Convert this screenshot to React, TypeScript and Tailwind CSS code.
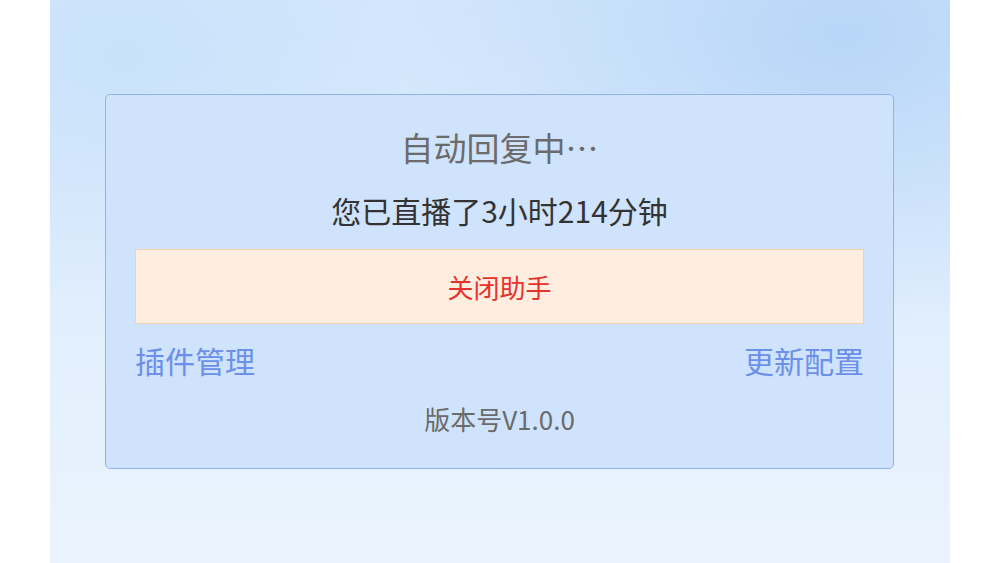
import React from "react";

export default function App() {
  const font = { fontFamily: '"Noto Sans CJK SC", "Noto Sans", sans-serif' };
  return (
    <div className="w-full h-[563px] bg-white flex justify-center" style={font}>
      <div className="w-[900px] h-full pt-[94px] px-[55px] bg-[radial-gradient(ellipse_at_88%_6%,#b8d6f8_0%,rgba(184,214,248,0)_40%),radial-gradient(ellipse_at_8%_10%,#c9e2fb_0%,rgba(201,226,251,0)_35%),linear-gradient(180deg,#d6e8fc_0%,#dfedfd_45%,#ebf4fe_100%)]">
        <div className="w-[789px] h-[375px] border border-[#8db4ee] rounded-[5px] bg-[#cfe3fc] flex flex-col items-center px-[29px]">
          <div className="mt-[32px] h-[40px] leading-[40px] text-[33px] text-[#6b6b6b]">自动回复中…</div>
          <div className="mt-[23px] h-[40px] leading-[40px] text-[30px] text-[#333333]">您已直播了3小时214分钟</div>
          <div className="mt-[19px] w-full h-[75px] border border-[#f6cfae] bg-[#ffeedf] flex items-center justify-center text-[26px] text-[#e5322d]">
            关闭助手
          </div>
          <div className="mt-[16px] w-full h-[40px] flex justify-between items-center text-[30px] text-[#6b8fea]">
            <span>插件管理</span>
            <span>更新配置</span>
          </div>
          <div className="mt-[19px] h-[40px] leading-[40px] text-[26px] text-[#6b6b6b]">版本号V1.0.0</div>
        </div>
      </div>
    </div>
  );
}
